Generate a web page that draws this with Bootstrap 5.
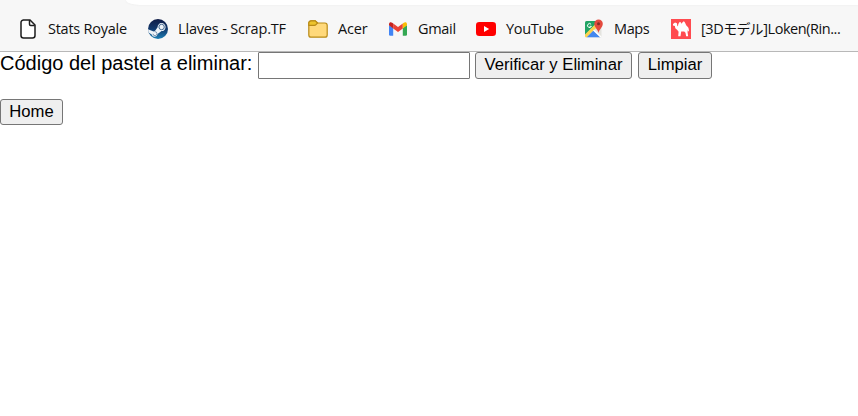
<!DOCTYPE html>
<html lang="es">
<head>
<meta charset="utf-8">
<meta name="viewport" content="width=device-width, initial-scale=1">
<title>Eliminar pastel</title>
<link href="https://cdn.jsdelivr.net/npm/bootstrap@5.3.0/dist/css/bootstrap.min.css" rel="stylesheet">
<style>
body{font-family:"Liberation Sans",Arial,sans-serif;color:#000;background:#fff;font-size:20px;line-height:23px}
.browser-top{height:52px;background:#f7f7f7;border-bottom:1px solid #b8b8b8}
.address-edge{height:5px;margin-left:126px;background:#fff;border-bottom-left-radius:14px 5px;box-shadow:0 0 2px #e8e8e8}
.bookmarks{height:48px;padding:0 0 0 18px;gap:20px;font-family:"Open Sans","Noto Sans CJK JP",sans-serif;font-size:14.5px;line-height:20px;color:#111}
.bookmark{gap:10px}
.bookmark svg{width:20px;height:20px;flex:none}
.bookmark span{white-space:nowrap;flex:none}
.w-stats{width:80px;letter-spacing:-.25px}
.w-llaves{width:110px;letter-spacing:-.17px}
.w-acer{width:30px;letter-spacing:-.2px}
.w-gmail{width:38px;letter-spacing:-.3px}
.w-yt{width:58px;letter-spacing:-.3px}
.w-maps{width:37px;letter-spacing:-.4px}
.w-loken{width:142px;letter-spacing:-.45px}
.jp{display:inline-block;width:40px;font-size:14px;letter-spacing:-.8px}
.field-label{width:258px;white-space:nowrap}
.code-input{width:212px;height:27px;border:1px solid #767676;border-radius:1px;padding:1px 2px;font-size:16.667px}
.plain-btn{height:27px;padding:0 0 3px;border:1px solid #767676;border-radius:3px;background:#efefef;color:#000;font-size:16.667px;line-height:19px}
.plain-btn:hover{background:#e5e5e5;color:#000}
.b-verify{width:157px;margin-left:5px}
.b-clear{width:74px;margin-left:6px}
.b-home{width:63px;height:26px;margin-top:20px;padding-bottom:1px}
</style>
<script src="https://cdn.jsdelivr.net/npm/bootstrap@5.3.0/dist/js/bootstrap.bundle.min.js"></script>
</head>
<body class="overflow-hidden">
<header class="browser-top overflow-hidden">
  <div class="address-edge"></div>
  <nav class="bookmarks d-flex align-items-center">
    <div class="bookmark d-flex align-items-center">
      <svg viewBox="0 0 20 20"><path d="M5 1h7l5 5v10.500a2.500 2.500 0 0 1-2.500 2.500h-9a2.500 2.500 0 0 1-2.500-2.500v-13a2.500 2.500 0 0 1 2.500-2.500z" fill="#fff" stroke="#1c1c1c" stroke-width="1.500"/><path d="M11.500 1v4.200c0 .8.400 1.200 1.200 1.200h4" fill="none" stroke="#1c1c1c" stroke-width="1.500"/></svg>
      <span class="w-stats">Stats Royale</span>
    </div>
    <div class="bookmark d-flex align-items-center">
      <svg viewBox="0 0 20 20"><defs><linearGradient id="sg" x1="0" y1="0" x2="0" y2="1"><stop offset="0" stop-color="#101c46"/><stop offset=".5" stop-color="#12396d"/><stop offset="1" stop-color="#1c7fb5"/></linearGradient></defs><circle cx="10" cy="10" r="10" fill="url(#sg)"/><path d="M0 10.200l5.600 2.200 1.400-.4 2.600-3.700a4 4 0 1 1 4 3.800l-4 2.800a3 3 0 0 1-5.900.5L.6 13.600z" fill="#eef3f8"/><circle cx="13.600" cy="8" r="2.700" fill="#eef3f8" stroke="#42658d" stroke-width="1"/><path d="M5 14.800a2 2 0 1 0 1.600-2.100" fill="none" stroke="#63809f" stroke-width=".8"/></svg>
      <span class="w-llaves">Llaves - Scrap.TF</span>
    </div>
    <div class="bookmark d-flex align-items-center">
      <svg viewBox="0 0 20 20"><path d="M.8 4.500c0-1.500.9-2.700 2.400-2.700h4l2.500 2.200h7.200a2.300 2.300 0 0 1 2.300 2.300v9.600a2.300 2.300 0 0 1-2.300 2.300H3.100a2.300 2.300 0 0 1-2.300-2.300z" fill="#ffd97b" stroke="#b98b17" stroke-width="1.200"/><path d="M.8 6.400V4.300a2.400 2.400 0 0 1 2.400-2.500h4L9.500 4 8 5.700c-.5.600-1 .7-1.700.7z" fill="#edc42c" stroke="#b98b17" stroke-width="1.200"/></svg>
      <span class="w-acer">Acer</span>
    </div>
    <div class="bookmark d-flex align-items-center">
      <svg viewBox="0 0 20 20"><path d="M1 6l4.200 3.100v7.700H2.300A1.300 1.300 0 0 1 1 15.500z" fill="#4285f4"/><path d="M14.800 9.100L19 6v9.500a1.300 1.300 0 0 1-1.300 1.300h-2.900z" fill="#34a853"/><path d="M5.200 4.500L10 8.100l4.800-3.600v4.900L10 13 5.200 9.400z" fill="#ea4335"/><path d="M1 5.200C1 3 3 2.700 4.200 3.700l1 .8v4.900L1 6.300z" fill="#c5221f"/><path d="M14.800 4.500l1-.8C17 2.700 19 3 19 5.200v1.100l-4.200 3.100z" fill="#fbbc04"/></svg>
      <span class="w-gmail">Gmail</span>
    </div>
    <div class="bookmark d-flex align-items-center">
      <svg viewBox="0 0 20 20"><rect y="3" width="20" height="14" rx="3.300" fill="#f00"/><path d="M8 7l5.200 3L8 13z" fill="#fff"/></svg>
      <span class="w-yt">YouTube</span>
    </div>
    <div class="bookmark d-flex align-items-center">
      <svg viewBox="0 0 20 20"><defs><clipPath id="mp"><rect x="1" y="2" width="16.500" height="16.500" rx="1.500"/></clipPath></defs><g clip-path="url(#mp)"><path d="M1 2h17v17H1z" fill="#e4e4df"/><path d="M1 2h14L1 16z" fill="#21a464"/><path d="M1 15.500L14 2.500l2.500 2L2.800 18.500H1z" fill="#fbd34d"/><path d="M2.500 18.500l7-7 7 7z" fill="#4387ef"/><path d="M9.500 11l8 7.500" stroke="#fff" stroke-width="1.400"/></g><path d="M7.100 5.300a2 2 0 1 0 .3 2H5.600" fill="none" stroke="#fff" stroke-width="1"/><path d="M14.500 14c-.5-3.800-4.200-5.300-4.200-9.200a4.200 4.200 0 0 1 8.500 0c0 3.900-3.800 5.400-4.300 9.200z" fill="#e34a3d"/><circle cx="14.500" cy="4.800" r="1.500" fill="#852e27"/></svg>
      <span class="w-maps">Maps</span>
    </div>
    <div class="bookmark d-flex align-items-center">
      <svg viewBox="0 0 20 20"><path d="M0 0h20v20H0z" fill="#ff4b50"/><path d="M2 5l2-1.500 1.900.7.500 3 .6-.2c.2-1.800.8-3.600 2-4.200.9.500 1.300 1.300 1.700 2 .5-.9 1.100-2.200 2.200-2.600 1.300 1 1.800 3.400 2.900 4.900 1.700 1.200 2.200 2.700 2.100 5l-.7.300-.5-1.300-.1 2.700.6 3.400h-2.100l-.6-3.500-1.300-1.300-3 .1-.7 4.700H7.200l.4-4.500-1.700-2.200C4.500 9.700 4 9 3.900 6.900L2 6.600z" fill="#fff"/></svg>
      <span class="w-loken">[3D<span class="jp">モデル</span>]Loken(Rin...</span>
    </div>
  </nav>
</header>
<main>
  <form class="d-flex align-items-start" onsubmit="return false">
    <label class="field-label" for="codigo">Código del pastel a eliminar:</label>
    <input class="code-input form-control" id="codigo" type="text">
    <button class="btn plain-btn b-verify" type="submit">Verificar y Eliminar</button>
    <button class="btn plain-btn b-clear" type="reset">Limpiar</button>
  </form>
  <button class="btn plain-btn b-home d-block" type="button">Home</button>
</main>
</body>
</html>
